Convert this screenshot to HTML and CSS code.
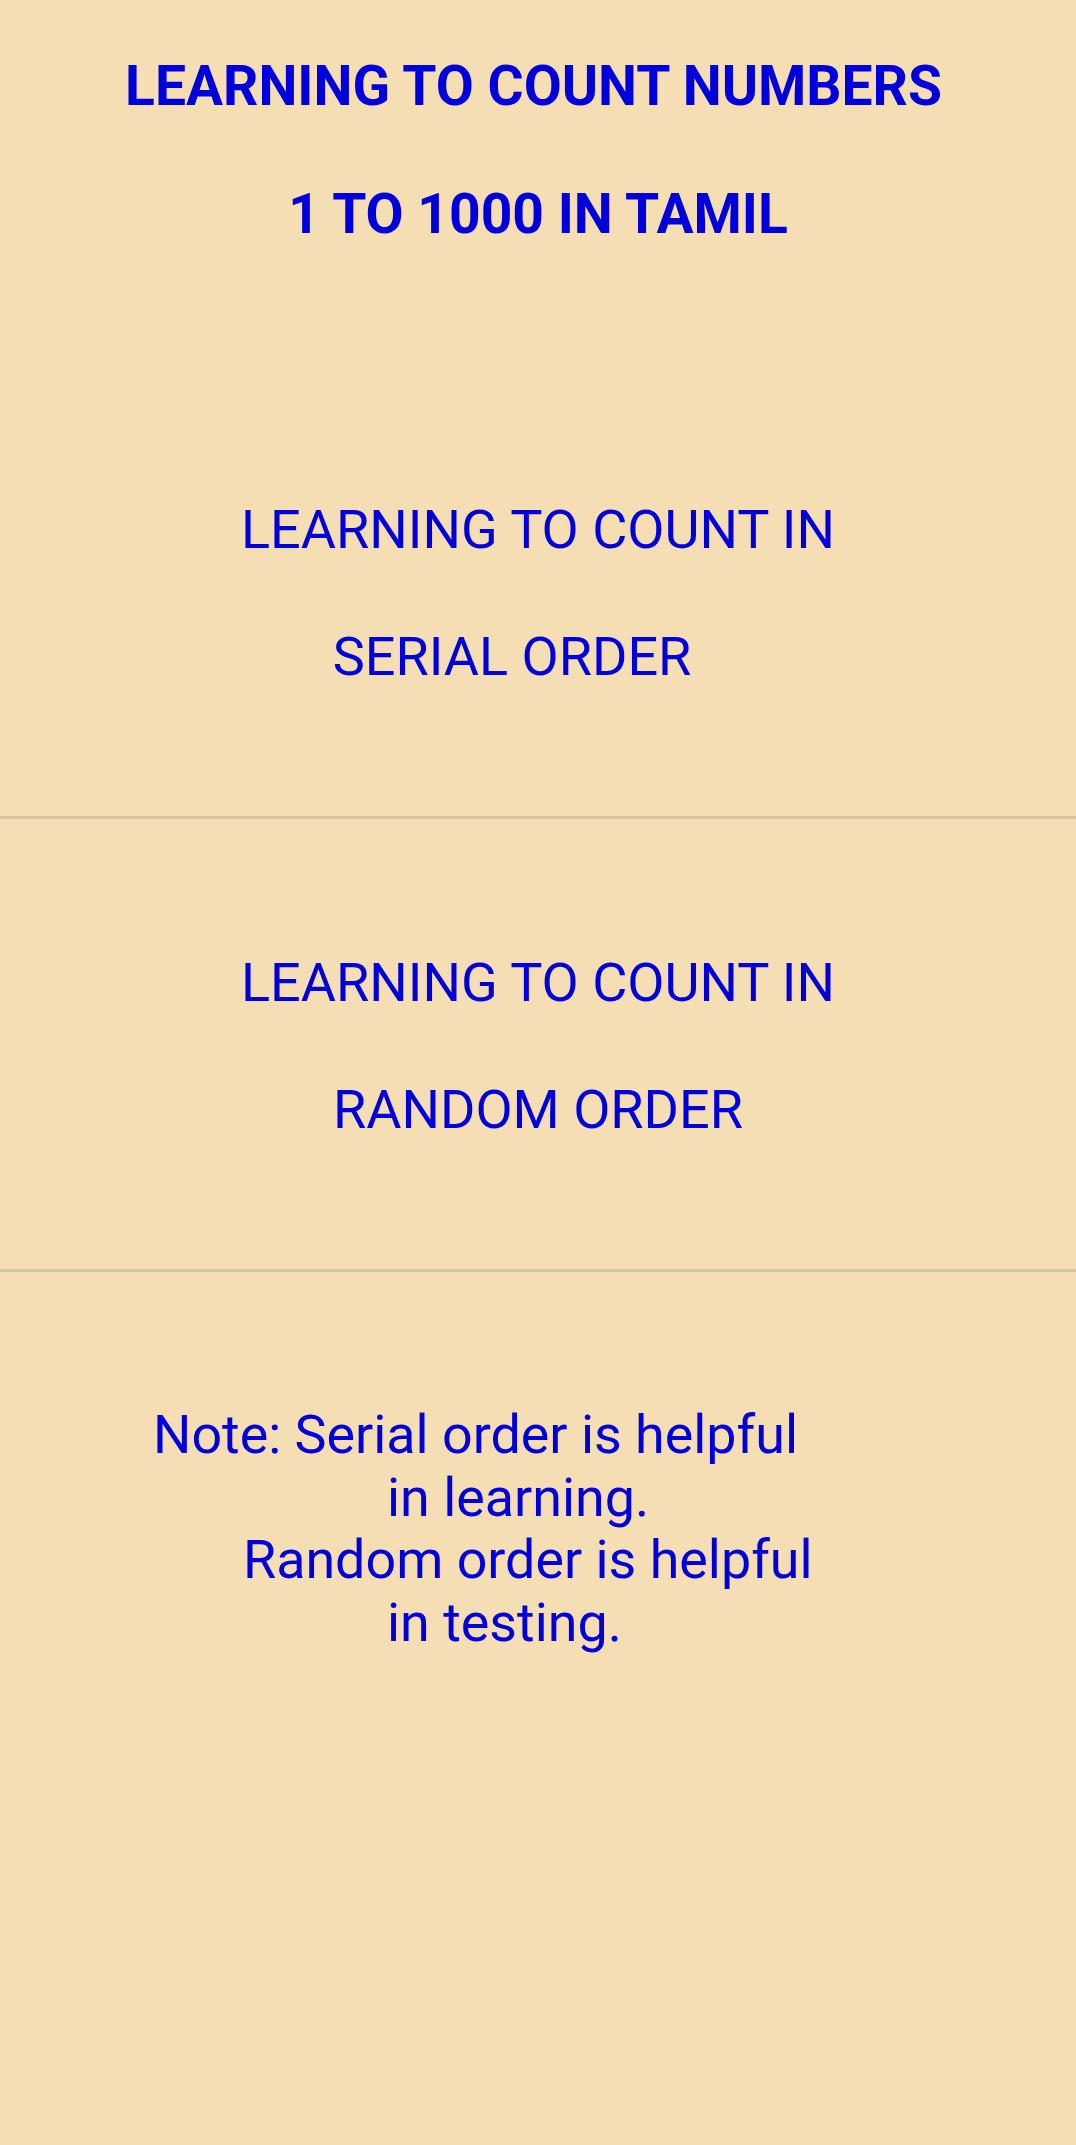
FILE: index.html
```html
<!DOCTYPE html>
<html>
<head>
<meta charset="utf-8">
<link rel="stylesheet" href="styles.css">
</head>
<body>
<div class="screen">
  <header class="title">
    <div class="title-line first">LEARNING TO COUNT NUMBERS</div>
    <div class="title-line gap">1 TO 1000 IN TAMIL</div>
  </header>
  <div class="option">
    <div class="option-line">LEARNING TO COUNT IN</div>
    <div class="option-line gap shift">SERIAL ORDER</div>
  </div>
  <div class="option">
    <div class="option-line">LEARNING TO COUNT IN</div>
    <div class="option-line gap">RANDOM ORDER</div>
  </div>
  <div class="note">
    <div class="note-line">Note: Serial order is helpful</div>
    <div class="note-line indent-lg">in learning.</div>
    <div class="note-line indent-sm">Random order is helpful</div>
    <div class="note-line indent-lg">in testing.</div>
  </div>
</div>
</body>
</html>
```

FILE: styles.css
```css
html, body {
  margin: 0;
  padding: 0;
  background: #f5deb3;
}

.screen {
  min-height: 2145px;
  background: #f5deb3;
  color: #0000dd;
  font-family: Roboto, "Noto Sans", "Liberation Sans", sans-serif;
  overflow: hidden;
}

.title {
  padding-top: 54px;
  text-align: center;
  font-weight: 700;
  font-size: 55.2px;
  line-height: 65px;
}

.title-line.first {
  padding-right: 9px;
}

.title-line.gap {
  margin-top: 63px;
}

.title + .option {
  margin-top: 119px;
}

.option {
  box-sizing: border-box;
  height: 453px;
  padding-top: 132px;
  border-bottom: 3px solid #d7c49f;
  text-align: center;
  font-size: 54px;
  line-height: 63.5px;
}

.option-line.gap {
  margin-top: 63.5px;
}

.option-line.shift {
  padding-right: 52px;
}

.note {
  padding-top: 132px;
  padding-left: 153px;
  font-size: 53.8px;
  line-height: 62.7px;
}

.note-line {
  white-space: nowrap;
}

.indent-lg {
  margin-left: 234px;
}

.indent-sm {
  margin-left: 90px;
}
```
